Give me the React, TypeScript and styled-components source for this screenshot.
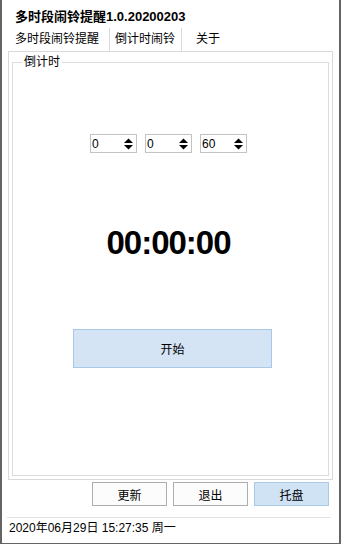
import React from "react";
import styled, { createGlobalStyle } from "styled-components";

const Global = createGlobalStyle`
  html, body { margin: 0; padding: 0; background: #ffffff; }
  body { font-family: "Liberation Sans", "Noto Sans CJK SC", sans-serif; }
  * { box-sizing: border-box; }
`;

const Window = styled.div`
  width: 341px;
  height: 544px;
  background: #ffffff;
  border-left: 2px solid #646464;
  border-right: 2px solid #646464;
  border-bottom: 1px solid #646464;
  display: flex;
  flex-direction: column;
  color: #000;
  font-family: "Liberation Sans", "Noto Sans CJK SC", sans-serif;
  overflow: hidden;
`;

const Title = styled.div`
  height: 28px;
  padding: 2px 0 0 13px;
  display: flex;
  align-items: center;
  font-size: 13px;
  font-weight: bold;
  white-space: nowrap;
`;

const TabBar = styled.div`
  height: 23px;
  display: flex;
  padding-left: 13px;
`;

const Tab = styled.div<{ $pl: number; $pr: number; $sep?: boolean }>`
  display: flex;
  align-items: center;
  padding: 0 ${(p) => p.$pr}px 4px ${(p) => p.$pl}px;
  font-size: 12px;
  white-space: nowrap;
  border-right: ${(p) => (p.$sep ? "1px solid #dadada" : "none")};
`;

const Panel = styled.div`
  height: 429px;
  margin: 0 6px;
  border: 1px solid #d9d9d9;
  display: flex;
  flex-direction: column;
  padding: 3px;
`;

const Group = styled.fieldset`
  flex: 1;
  margin: 0;
  padding: 0;
  border: 1px solid #dcdcdc;
  min-width: 0;
`;

const Legend = styled.legend`
  margin-left: 9px;
  padding: 0 2px;
  font-size: 12px;
  line-height: 14px;
`;

const SpinRow = styled.div`
  display: flex;
  gap: 8px;
  margin-top: 65px;
  padding-left: 77px;
`;

const Spin = styled.div`
  width: 47px;
  height: 19px;
  border: 1px solid #c3c3c3;
  display: flex;
  align-items: center;
  justify-content: space-between;
  padding: 0 3px 0 1px;
  font-size: 12px;
  font-family: "Liberation Sans", sans-serif;
`;

const Time = styled.div`
  margin-top: 73px;
  padding-right: 4px;
  text-align: center;
  font-family: "Liberation Sans", sans-serif;
  font-weight: bold;
  font-size: 33px;
  line-height: 33px;
  letter-spacing: -1px;
`;

const StartButton = styled.div`
  margin: 70px 0 0 60px;
  width: 199px;
  height: 39px;
  background: #d4e4f4;
  border: 1px solid #a8c8e6;
  display: flex;
  align-items: center;
  justify-content: center;
  font-size: 12px;
`;

const ButtonRow = styled.div`
  margin-top: 2px;
  height: 24px;
  display: flex;
  justify-content: flex-end;
  gap: 6px;
  padding-right: 10px;
`;

const Btn = styled.div<{ $active?: boolean }>`
  width: 75px;
  height: 24px;
  border: 1px solid ${(p) => (p.$active ? "#a9c9e7" : "#adadad")};
  background: ${(p) => (p.$active ? "#cfe3f5" : "#fcfcfc")};
  display: flex;
  align-items: center;
  justify-content: center;
  font-size: 12px;
`;

const Status = styled.div`
  margin: 11px 8px 0 5px;
  border-top: 1px solid #e3e3e3;
  height: 22px;
  line-height: 21px;
  padding-left: 2px;
  font-size: 12px;
  white-space: nowrap;
`;

const Arrows = () => (
  <svg width="9" height="12" viewBox="0 0 9 12">
    <polygon points="0,5 4.5,0.5 9,5" fill="#000" />
    <polygon points="0,7 4.5,11.5 9,7" fill="#000" />
  </svg>
);

const spins = ["0", "0", "60"];

export default function App() {
  return (
    <>
      <Global />
      <Window>
        <Title>多时段闹铃提醒1.0.20200203</Title>
        <TabBar>
          <Tab $pl={0} $pr={10} $sep>多时段闹铃提醒</Tab>
          <Tab $pl={5} $pr={6} $sep>倒计时闹铃</Tab>
          <Tab $pl={14} $pr={0}>关于</Tab>
        </TabBar>
        <Panel>
          <Group>
            <Legend>倒计时</Legend>
            <SpinRow>
              {spins.map((v, i) => (
                <Spin key={i}>
                  <span>{v}</span>
                  <Arrows />
                </Spin>
              ))}
            </SpinRow>
            <Time>00:00:00</Time>
            <StartButton>开始</StartButton>
          </Group>
        </Panel>
        <ButtonRow>
          <Btn>更新</Btn>
          <Btn>退出</Btn>
          <Btn $active>托盘</Btn>
        </ButtonRow>
        <Status>2020年06月29日 15:27:35 周一</Status>
      </Window>
    </>
  );
}
